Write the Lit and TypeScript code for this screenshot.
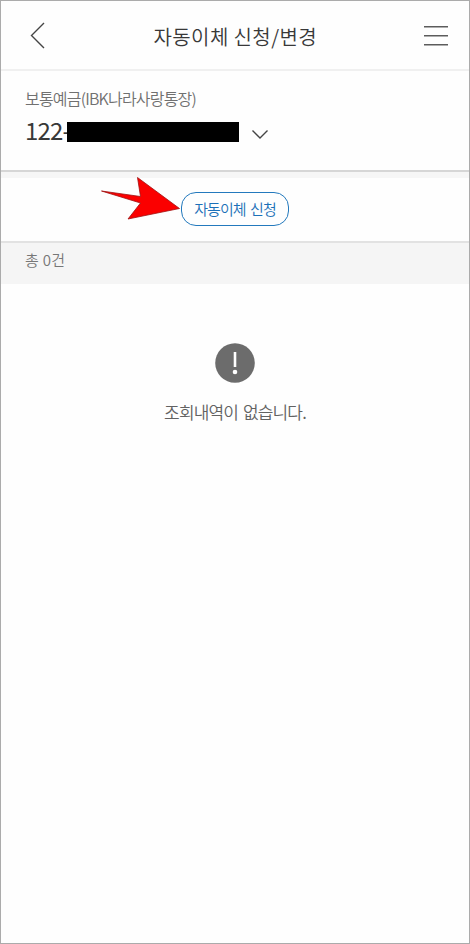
import { LitElement, html, css } from "lit";
import { customElement } from "lit/decorators.js";

@customElement("app-root")
export class AppRoot extends LitElement {
  static styles = css`
    :host {
      display: flex;
      flex-direction: column;
      box-sizing: border-box;
      width: 470px;
      height: 944px;
      border: 1px solid #ababab;
      background: #fefefe;
      color: #383838;
      font-family: "Noto Sans CJK KR", sans-serif;
      font-weight: 350;
      overflow: hidden;
    }
    svg { display: block; flex: none; }
    .header {
      display: flex;
      align-items: center;
      justify-content: space-between;
      box-sizing: border-box;
      height: 70px;
      padding: 0 20.5px 0 29px;
      border-bottom: 2px solid #f0f0f0;
    }
    .title {
      margin: 4px 0 0 0;
      font-size: 20px;
      line-height: 30px;
      font-weight: 350;
      letter-spacing: 0.4px;
      white-space: nowrap;
    }
    .account {
      box-sizing: border-box;
      height: 101px;
      padding: 15px 24px 0;
      border-bottom: 2px solid #d6d6d6;
    }
    .label {
      font-size: 16px;
      line-height: 24px;
      letter-spacing: -0.8px;
      color: #707070;
      white-space: nowrap;
    }
    .number { display: flex; align-items: center; height: 44px; }
    .digits {
      width: 42px;
      margin-top: -4px;
      font-size: 24px;
      line-height: 36px;
      font-weight: 400;
      letter-spacing: -0.8px;
      white-space: nowrap;
    }
    .mask { width: 172px; height: 20px; background: #000; }
    .chevron { margin: 6px 0 0 12px; }
    .actions {
      position: relative;
      display: flex;
      justify-content: center;
      box-sizing: border-box;
      height: 71px;
      padding-top: 14px;
      border-top: 6px solid #f6f6f6;
      border-bottom: 2px solid #e2e2e2;
    }
    .apply {
      box-sizing: border-box;
      width: 108px;
      height: 34px;
      padding: 0;
      border: 1.5px solid #2379bd;
      border-radius: 15px;
      background: #fefefe;
      color: #1b70b8;
      font: 350 15px/28px "Noto Sans CJK KR", sans-serif;
      letter-spacing: -0.95px;
      word-spacing: 2px;
      white-space: nowrap;
    }
    .pointer { position: absolute; left: 98px; top: -3px; }
    .count {
      height: 41px;
      padding-left: 24px;
      background: #f5f5f5;
      color: #777;
      font-size: 15px;
      line-height: 34px;
      letter-spacing: 0.3px;
    }
    .empty {
      display: flex;
      flex-direction: column;
      align-items: center;
      padding-top: 59px;
    }
    .message {
      margin-top: 16px;
      font-size: 17px;
      line-height: 26px;
      letter-spacing: -0.85px;
      word-spacing: 2px;
      color: #626262;
      white-space: nowrap;
    }
  `;

  render() {
    return html`
      <header class="header">
        <svg width="18" height="28" viewBox="0 0 18 28" fill="none" stroke="#444" stroke-width="1.4">
          <path d="M14 2 L1.5 14.5 L14 27" />
        </svg>
        <h1 class="title">자동이체 신청/변경</h1>
        <svg width="26" height="24" viewBox="0 0 26 24" fill="none" stroke="#5c5c5c" stroke-width="1.6">
          <path d="M1 3.8H25M1 12.8H25M1 21.8H25" />
        </svg>
      </header>
      <section class="account">
        <div class="label">보통예금(IBK나라사랑통장)</div>
        <div class="number">
          <span class="digits">122-</span>
          <span class="mask"></span>
          <svg class="chevron" width="18" height="12" viewBox="0 0 18 12" fill="none" stroke="#444" stroke-width="1.4">
            <path d="M1.5 1.5 L9 9 L16.5 1.5" />
          </svg>
        </div>
      </section>
      <section class="actions">
        <button class="apply">자동이체 신청</button>
        <svg class="pointer" width="84" height="48" viewBox="0 0 84 48">
          <path d="M2.5 16 L41.5 21.5 L38.5 2.5 L80.5 33.5 L29 44 L41.5 28 Z" fill="#fb0000" stroke="#a01010" stroke-width="0.8" />
        </svg>
      </section>
      <div class="count">총 0건</div>
      <section class="empty">
        <svg width="40" height="40" viewBox="0 0 40 40">
          <circle cx="20" cy="20" r="19.8" fill="#6c6c6c" />
          <path d="M20 9V24" stroke="#fff" stroke-width="2.6" />
          <circle cx="20" cy="29" r="2.3" fill="#fff" />
        </svg>
        <div class="message">조회내역이 없습니다.</div>
      </section>
    `;
  }
}
